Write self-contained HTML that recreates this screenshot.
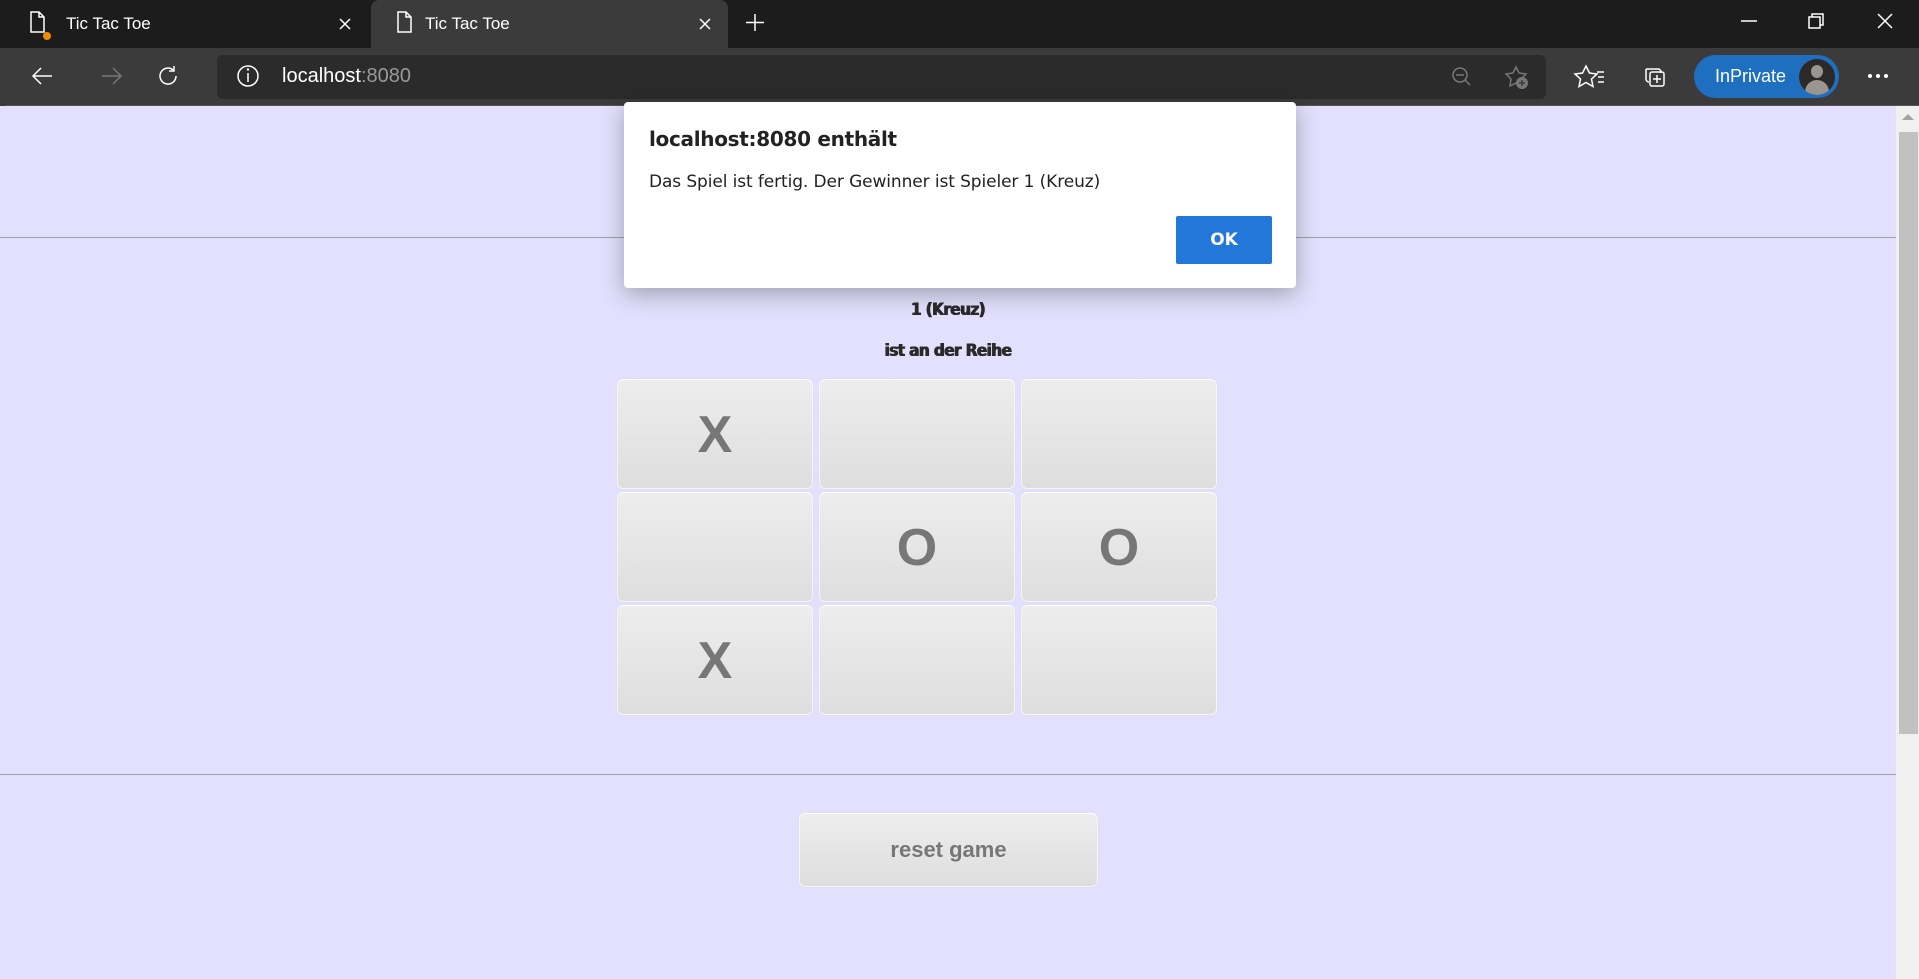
<!DOCTYPE html>
<html><head><meta charset="utf-8"><style>
*{box-sizing:border-box;margin:0;padding:0}
body{width:1919px;height:979px;overflow:hidden;position:relative;background:#e3e0fd;font-family:"Liberation Sans",sans-serif}
.abs{position:absolute}
#tabs{left:0;top:0;width:1919px;height:48px;background:#1c1c1c}
#tb{left:0;top:48px;width:1919px;height:58px;background:#3b3b3b}
.tabt{color:#fff;font-size:17px;top:14px}
#addr{left:217px;top:55px;width:1329px;height:44px;background:#2b2b2b;border-radius:6px}
.cell{position:absolute;width:196px;height:110px;border-radius:6px;background:linear-gradient(#ededed,#dedede);border:1px solid #f6f6f6;border-top-color:#fff;box-shadow:0 0 1px #ccc;color:#777;font:bold 52px "Liberation Sans",sans-serif;text-align:center;line-height:110px}
.hr{left:0;width:1896px;height:1px;background:#a0a0a0}
.cond{font:bold 17px "DejaVu Sans Condensed","Liberation Sans",sans-serif;color:#2a2a2a;text-align:center;width:1896px;left:0;letter-spacing:-0.6px;text-shadow:0.5px 0 0 #2a2a2a,-0.5px 0 0 #2a2a2a}
</style></head><body>
<div id="tabs" class="abs"></div>
<div class="abs" style="left:371px;top:0;width:357px;height:50px;background:#3b3b3b;border-radius:8px 8px 0 0"></div>
<svg class="abs" style="left:0;top:0" width="1919" height="106">
<g stroke="#fff" stroke-width="1.5" fill="none">
<path d="M31 12h8l5 5v15h-13z M39 12v5h5"/>
<path d="M398 12h8l5 5v15h-13z M406 12v5h5"/>
<path d="M340 19l10 10M350 19l-10 10"/>
<path d="M700 19l10 10M710 19l-10 10"/>
<path d="M755 14v17M746 22.5h18"/>
<path d="M1741 21h16"/>
<rect x="1809" y="17" width="11" height="11"/><path d="M1812 17v-3h11v11h-3"/>
<path d="M1878 14l14 14M1892 14l-14 14"/>
<path d="M52 76H33M41 68l-8 8 8 8"/>
<path d="M176 76a8 8 0 1 1-3-6.2M174 66v5h-5"/>
<path d="M1586 66l3.5 7 7.5 1-5.5 5 1.5 7.5-7-4-7 4 1.5-7.5-5.5-5 7.5-1z M1597 72h7M1598 77h6M1598 82h6"/>
<path d="M1646 69h12a3 3 0 0 1 3 3v1M1646 69v10a3 3 0 0 0 3 3"/><rect x="1650" y="72" width="14" height="14" rx="2"/><path d="M1657 75v8M1653 79h8"/>
</g>
<g stroke="#777" stroke-width="1.5" fill="none">
<path d="M121 76H102M113 68l8 8-8 8"/>
</g>
<circle cx="47" cy="36" r="4" fill="#f28b00"/>
<circle cx="1870" cy="76" r="2" fill="#fff"/><circle cx="1878" cy="76" r="2" fill="#fff"/><circle cx="1886" cy="76" r="2" fill="#fff"/>
<path d="M5 106h1914" stroke="#555" stroke-width="2"/>
</svg>
<div class="abs tabt" style="left:66px">Tic Tac Toe</div>
<div class="abs tabt" style="left:425px">Tic Tac Toe</div>
<div id="tb" class="abs" style="z-index:-1"></div>
<div id="addr" class="abs" style="z-index:0"></div>
<div class="abs" style="left:282px;top:65px;font-size:20px;color:#fff;z-index:1">localhost<span style="color:#999">:8080</span></div>
<svg class="abs" style="left:0;top:0;z-index:1" width="1919" height="106"><g fill="none" stroke="#fff" stroke-width="1.5"><circle cx="248" cy="76" r="10"/><path d="M248 73v9"/></g><circle cx="248" cy="69.5" r="1.2" fill="#fff"/><g stroke="#777" stroke-width="1.5" fill="none"><circle cx="1460" cy="75" r="7"/><path d="M1465 80l5 5M1456 75h8"/><path d="M1516 67l3 6 7 1-5 5 1 7-6-3-6 3 1-7-5-5 7-1z"/></g><circle cx="1522" cy="83" r="6" fill="#777"/><path d="M1522 80v6M1519 83h6" stroke="#3b3b3b" stroke-width="1.5"/></svg>
<div class="abs" style="left:1694px;top:55px;width:145px;height:43px;border-radius:22px;background:#1f6fc0;color:#fff;font-size:18px;line-height:43px;padding-left:21px">InPrivate</div>
<div class="abs" style="left:1799px;top:59px;width:36px;height:36px;border-radius:50%;background:#2c2a28;overflow:hidden"><div class="abs" style="left:12px;top:6px;width:12px;height:13px;border-radius:50%;background:#9a958f"></div><div class="abs" style="left:6px;top:21px;width:24px;height:18px;border-radius:12px 12px 0 0;background:#9a958f"></div></div>

<div class="abs" style="left:1896px;top:106px;width:23px;height:873px;background:#f0f0f0"></div>
<div class="abs" style="left:1899px;top:132px;width:19px;height:602px;background:#c1c1c1"></div>
<div class="abs" style="left:1902px;top:114px;width:0;height:0;border-left:6px solid transparent;border-right:6px solid transparent;border-bottom:6px solid #a3a3a3"></div>

<div class="abs hr" style="top:237px"></div>
<div class="abs hr" style="top:774px"></div>
<div class="abs cond" style="top:300px">1 (Kreuz)</div>
<div class="abs cond" style="top:341px">ist an der Reihe</div>
<div class="cell" style="left:617px;top:379px">X</div>
<div class="cell" style="left:819px;top:379px"></div>
<div class="cell" style="left:1021px;top:379px"></div>
<div class="cell" style="left:617px;top:492px"></div>
<div class="cell" style="left:819px;top:492px">O</div>
<div class="cell" style="left:1021px;top:492px">O</div>
<div class="cell" style="left:617px;top:605px">X</div>
<div class="cell" style="left:819px;top:605px"></div>
<div class="cell" style="left:1021px;top:605px"></div>
<div class="cell" style="left:799px;top:813px;width:299px;height:74px;line-height:72px;font-size:22px">reset game</div>

<div class="abs" style="left:624px;top:102px;width:672px;height:186px;background:#fff;border-radius:4px;box-shadow:0 6px 24px rgba(0,0,0,.3)">
<div class="abs" style="left:25px;top:25px;font:bold 20px 'DejaVu Sans','Liberation Sans',sans-serif;color:#222;letter-spacing:-0.3px">localhost:8080 enthält</div>
<div class="abs" style="left:25px;top:70px;font:17px 'DejaVu Sans','Liberation Sans',sans-serif;color:#222;letter-spacing:-0.1px">Das Spiel ist fertig. Der Gewinner ist Spieler 1 (Kreuz)</div>
<div class="abs" style="left:552px;top:114px;width:96px;height:48px;background:#2277d9;border-radius:2px;color:#fff;font:bold 17px 'DejaVu Sans',sans-serif;text-align:center;line-height:48px">OK</div>
</div>
</body></html>
